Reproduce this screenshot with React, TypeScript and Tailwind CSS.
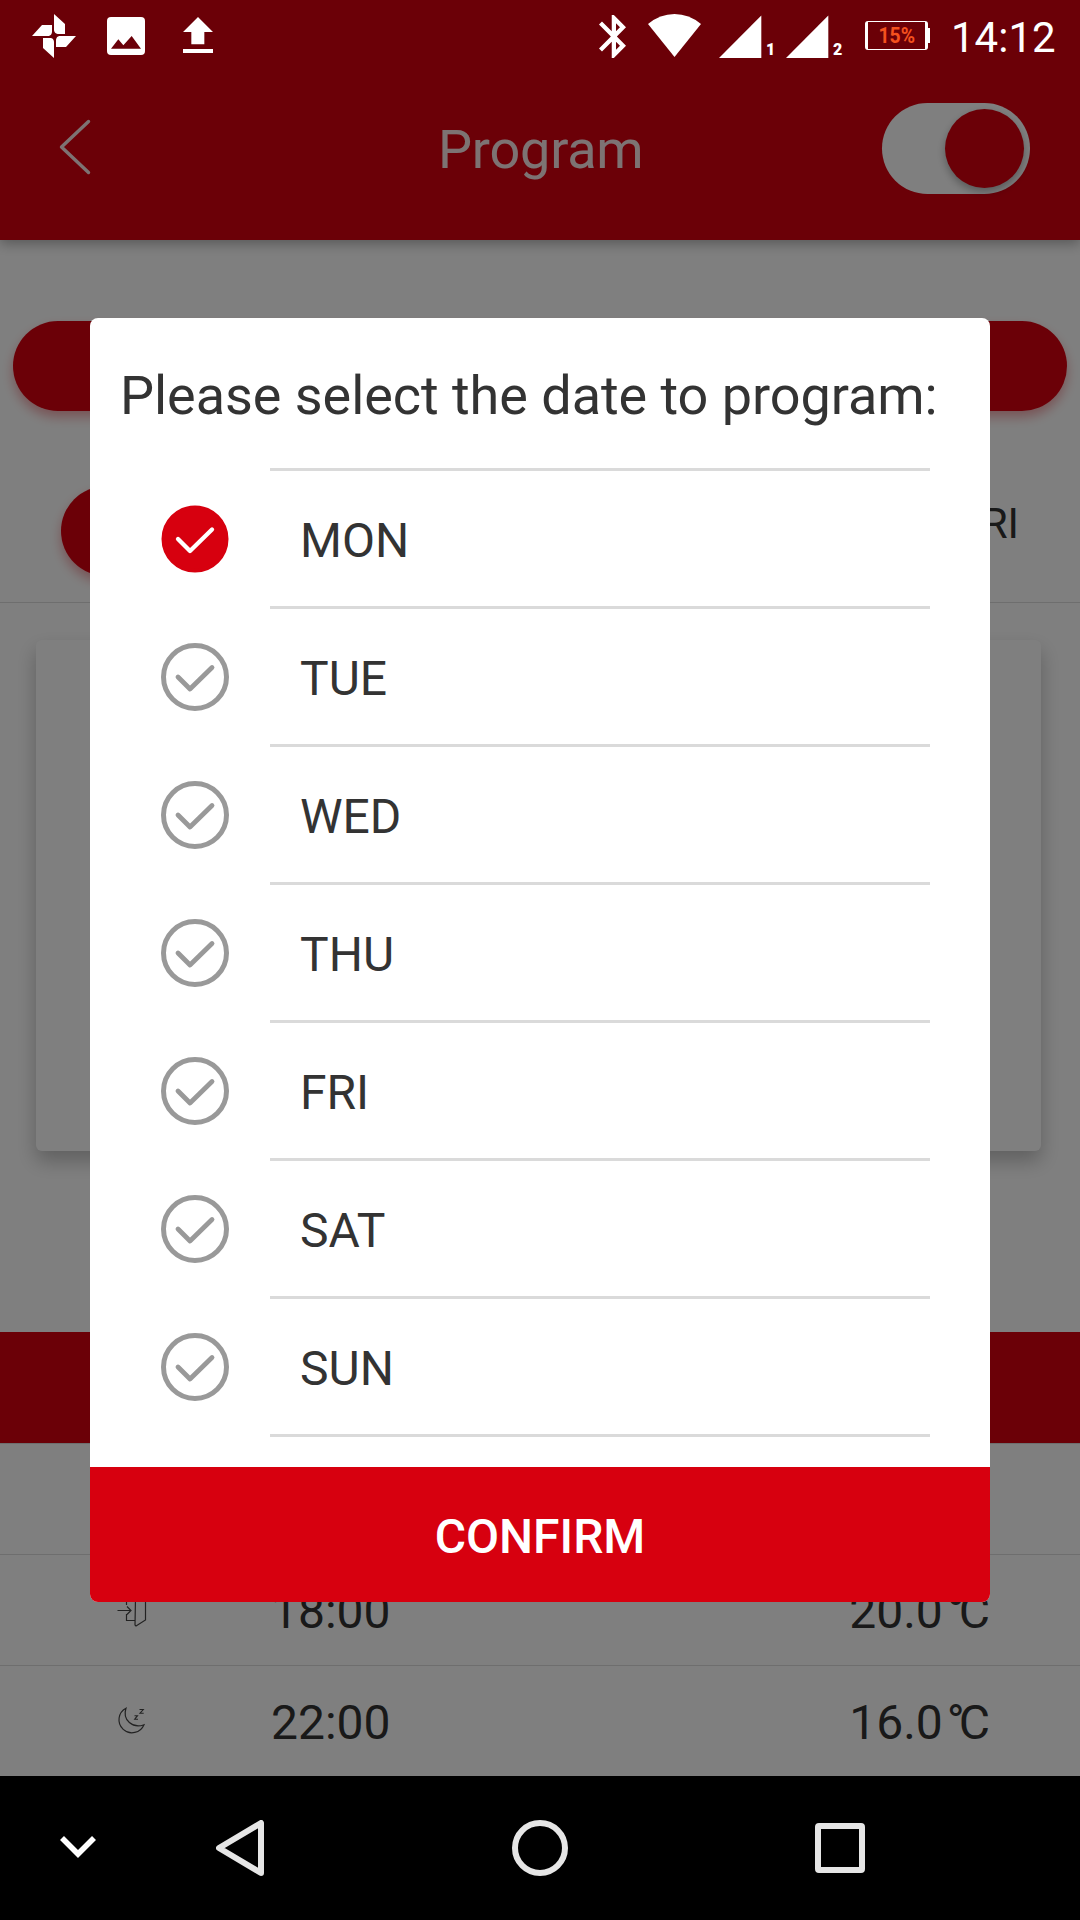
import clsx from "clsx";

const DAYS = ["MON", "TUE", "WED", "THU", "FRI", "SAT", "SUN"];

const SignalIcon = ({ sim }: { sim: string }) => (
  <div className="flex items-end">
    <svg className="w-[43px] h-[43px]" viewBox="0 0 43 43" fill="#fff">
      <path d="M42.3 0.6V43H0z" />
    </svg>
    <span className="w-[24px] pl-[4px] text-[16px] leading-[17px] font-black">
      {sim}
    </span>
  </div>
);

const StatusBar = () => (
  <div className="relative z-20 flex h-[72px] items-center text-white">
    <svg className="ml-8 w-[44px] h-[44px]" viewBox="96 42 132 132" fill="#fff">
      <path d="M162 42L195 72V102H173Q163 100 162 91zM228 108L198 141H168V120Q169 110 178 108zM162 174L129 144V114H151Q161 115 162 125zM96 108L126 75H156V96Q155 106 146 108z" />
    </svg>
    <svg className="ml-[31px] w-[38px] h-[38px]" viewBox="321 51 114 114">
      <rect x="321" y="51" width="114" height="114" rx="12" fill="#fff" />
      <path d="M333 146L355 118L370 136L395 108L423 146z" fill="#6b0009" />
    </svg>
    <svg className="ml-[38px] -mt-[2px] w-[30px] h-[36px]" viewBox="549 51 90 108" fill="#fff">
      <path d="M594 51L639 96H613V133H574V96H549zM549 147H639V159H549z" />
    </svg>

    <svg
      className="ml-[386px] w-[27px] h-[43px]"
      viewBox="5 2 12.71 20"
      preserveAspectRatio="none"
      fill="#fff"
    >
      <path d="M17.71 7.71L12 2h-1v7.59L6.41 5 5 6.41 10.59 12 5 17.59 6.41 19 11 14.41V22h1l5.71-5.71-4.3-4.29 4.3-4.29zM13 5.83l1.88 1.88L13 9.59V5.83zm1.88 10.46L13 18.17v-3.76l1.88 1.88z" />
    </svg>
    <svg className="ml-[22px] w-[53px] h-[43px] -mt-px" viewBox="264 42 159 129" fill="#fff">
      <path d="M264 72Q300 42 343.500 42T423 72L343.500 171z" />
    </svg>
    <div className="ml-[18px] flex">
      <SignalIcon sim="1" />
      <SignalIcon sim="2" />
    </div>
    <div className="ml-[12px] flex items-center -mt-px">
      <div className="flex h-[29px] w-[63px] items-center justify-center rounded-[3px] border-x-[3px] border-y-[1.5px] border-white">
        <span className="mt-px scale-x-[.88] text-[22px] leading-none font-bold text-[#f4511e]">
          15%
        </span>
      </div>
      <div className="h-[15px] w-[2px] bg-white" />
    </div>
    <span className="ml-[21px] mt-[4px] text-[42px] leading-none">14:12</span>
  </div>
);

const Header = () => (
  <header className="bg-[#d7000f] shadow-[0_4px_12px_rgba(0,0,0,0.3)]">
    <div className="h-[72px]" />
    <div className="flex h-[168px] items-start text-white/90">
      <svg
        className="mt-[47px] ml-[59px] w-[32px] h-[56px]"
        viewBox="0 0 32 56"
        fill="none"
        stroke="currentColor"
        strokeWidth="3.400"
        strokeLinecap="round"
        strokeLinejoin="round"
      >
        <path d="M29.500 2.500L2.500 28L29.500 53.500" />
      </svg>
      <h1 className="ml-[347px] mt-[46px] w-[444px] text-[54px] leading-[64px] tracking-[-0.2px]">
        Program
      </h1>
      <div className="mt-[31px] flex h-[91px] w-[148px] justify-end rounded-full bg-white p-[6px]">
        <div className="size-[79px] rounded-full bg-[#d7000f] shadow-[0_4px_8px_rgba(0,0,0,0.3)]" />
      </div>
    </div>
  </header>
);

const LeaveHomeIcon = () => (
  <svg className="w-[30px] h-[34px]" viewBox="0 0 30 34" fill="none" stroke="#444" strokeWidth="1.200">
    <path d="M0.500 17.500H13.500M10 13.500L14 17.500L10 21.500" />
    <path d="M9.500 12V5H18M9.500 21V27.500H18" />
    <path d="M18.500 5L28.500 1V27L19 33L18 32z" />
  </svg>
);

const SleepIcon = () => (
  <svg className="w-[30px] h-[30px]" viewBox="0 0 30 30" fill="none" stroke="#444" strokeWidth="1.200">
    <path d="M9 2.200A13 13 0 1 0 27 18.700C16 23 5 14 9 2.200z" />
    <path d="M17.500 9.700H20.500L17.700 13.200H21M22.500 3.500H26.300L23 7.200H26.700" strokeWidth="1.100" />
  </svg>
);

interface SlotProps {
  icon?: React.ReactNode;
  time?: string;
  temperature?: string;
}

const Slot = ({ icon, time, temperature }: SlotProps) => (
  <div className="flex h-[111px] items-center border-t border-[#dcdcdc] pr-[90px] pl-[117px] text-[48px] text-[#333]">
    <div className="w-[154px]">{icon}</div>
    <span className="mt-[4px] flex-1 leading-none">{time}</span>
    {temperature && (
      <span className="mt-[4px] leading-none">
        {temperature}
        <span className="ml-[4px] tracking-[-4px]">°</span>
        <span className="-ml-[2px]">C</span>
      </span>
    )}
  </div>
);

const ProgramPage = () => (
  <div className="h-[1776px] bg-white">
    <Header />
    <div className="mx-[13px] mt-[81px] h-[90px] rounded-full bg-[#d7000f] shadow-[0_6px_12px_rgba(215,0,15,0.35)]" />
    <div className="mt-[75px] flex h-[117px] items-start justify-between border-b border-[#dcdcdc] pr-[61px] pl-[61px]">
      <div className="size-[90px] rounded-full bg-[#d7000f] shadow-[0_6px_12px_rgba(215,0,15,0.35)]" />
      <span className="mt-[17px] text-[42px] leading-none text-[#333]">FRI</span>
    </div>
    <div className="mr-[39px] ml-[36px] mt-[37px] h-[511px] rounded-md bg-white shadow-[0_10px_20px_rgba(0,0,0,0.25)]" />
    <div className="mt-[181px] h-[111px] bg-[#d7000f]" />
    <Slot />
    <Slot icon={<LeaveHomeIcon />} time="18:00" temperature="20.0" />
    <Slot icon={<SleepIcon />} time="22:00" temperature="16.0" />
  </div>
);

const CheckIcon = ({ checked }: { checked: boolean }) => (
  <svg className="-mt-[2px] w-[68px] h-[68px]" viewBox="0 0 68 68" fill="none">
    <circle
      cx="34"
      cy="34"
      r="31.500"
      strokeWidth={checked ? 4 : 5}
      className={clsx(checked ? "fill-[#d7000f] stroke-[#d7000f]" : "stroke-[#999]")}
    />
    <path
      d="M17 34L29 46L51 24.500"
      stroke={checked ? "#fff" : "#999"}
      strokeWidth={checked ? 4.3 : 4.8}
      strokeLinecap="round"
      strokeLinejoin="round"
    />
  </svg>
);

const DateDialog = () => (
  <div className="absolute inset-x-0 top-0 z-10 flex h-[1776px] items-start justify-center bg-black/50 pt-[318px]">
    <div className="flex h-[1284px] w-[900px] flex-col overflow-hidden rounded-lg bg-white">
      <h2 className="h-[150px] pt-[46px] pl-[30px] text-[54px] leading-[64px] tracking-[-0.05px] whitespace-nowrap text-[#333]">
        Please select the date to program:
      </h2>
      <div className="ml-[180px] h-[3px] w-[660px] bg-[#dadada]" />
      {DAYS.map((day, i) => (
        <div key={day} className="flex h-[138px] items-center pl-[71px]">
          <CheckIcon checked={i === 0} />
          <div className="ml-[41px] flex h-full w-[660px] items-center border-b-3 border-[#dadada] pl-[30px] text-[48px] text-[#333]">
            <span className="mt-[4px] leading-none">{day}</span>
          </div>
        </div>
      ))}
      <button className="mt-auto h-[135px] bg-[#d7000f] pt-[4px] text-[48px] leading-none font-medium text-white">
        CONFIRM
      </button>
    </div>
  </div>
);

const NavBar = () => (
  <div className="flex h-[144px] items-center bg-black">
    <svg className="ml-[60px] -mt-[2px] w-[36px] h-[24px]" viewBox="0 0 36 24" fill="none" stroke="#fff" strokeWidth="5.600">
      <path d="M2 3L18 19L34 3" />
    </svg>
    <svg
      className="ml-[120px] w-[48px] h-[56px]"
      viewBox="0 0 48 56"
      fill="none"
      stroke="#e6e6e6"
      strokeWidth="6"
      strokeLinejoin="round"
    >
      <path d="M45 3V53L3 28z" />
    </svg>
    <div className="ml-[248px] size-[56px] rounded-full border-6 border-[#e6e6e6]" />
    <div className="ml-[247px] size-[50px] rounded-[4px] border-6 border-[#e6e6e6]" />
  </div>
);

export default function App() {
  return (
    <div className="relative h-[1920px] w-[1080px] overflow-hidden bg-black font-['Roboto',sans-serif]">
      <div className="-mb-[72px]">
        <StatusBar />
      </div>
      <ProgramPage />
      <DateDialog />
      <NavBar />
    </div>
  );
}
